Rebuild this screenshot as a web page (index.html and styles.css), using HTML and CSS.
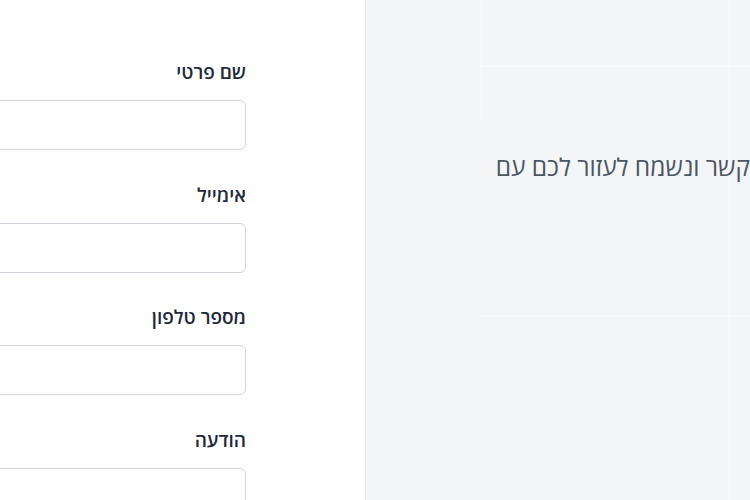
FILE: index.html
```html
<!DOCTYPE html>
<html lang="he">
<head>
<meta charset="utf-8">
<link rel="stylesheet" href="styles.css">
</head>
<body>
<div class="page">
  <section class="form-col">
    <form class="form" dir="rtl">
      <div class="field">
        <label class="label">שם פרטי</label>
        <input class="input" type="text">
      </div>
      <div class="field">
        <label class="label">אימייל</label>
        <input class="input" type="email">
      </div>
      <div class="field">
        <label class="label">מספר טלפון</label>
        <input class="input" type="tel">
      </div>
      <div class="field">
        <label class="label">הודעה</label>
        <textarea class="input textarea"></textarea>
      </div>
    </form>
  </section>
  <aside class="info">
    <p class="info-text" dir="rtl">קשר ונשמח לעזור לכם עם</p>
  </aside>
</div>
</body>
</html>
```
FILE: styles.css
```css
html, body {
  margin: 0;
  padding: 0;
  background: #ffffff;
  font-family: "Open Sans", "Liberation Sans", sans-serif;
}
.page {
  display: flex;
  width: 750px;
  height: 500px;
  overflow: hidden;
}
.form-col {
  width: 365px;
  flex: none;
  overflow: hidden;
  display: flex;
  justify-content: flex-end;
  padding-right: 119px;
  box-sizing: border-box;
}
.form {
  flex: none;
  width: 320px;
  padding-top: 60px;
  display: flex;
  flex-direction: column;
  gap: 32.5px;
}
.field {
  display: flex;
  flex-direction: column;
  gap: 16px;
}
.label {
  font-size: 19px;
  line-height: 24px;
  font-weight: 600;
  color: #1f2937;
  text-align: right;
}
.input {
  display: block;
  box-sizing: border-box;
  width: 100%;
  height: 50px;
  margin: 0;
  border: 1px solid #d1d5db;
  border-radius: 6px;
  background: #ffffff;
  font: inherit;
}
.textarea {
  height: 120px;
  resize: none;
}
.info {
  flex: none;
  width: 385px;
  box-sizing: border-box;
  border-left: 1px solid #e5e7eb;
  background-color: #f4f5f7;
  background-image:
    linear-gradient(to bottom, transparent 65px, rgba(255,255,255,0.35) 65px, rgba(255,255,255,0.35) 67px, transparent 67px),
    linear-gradient(to right, transparent 362px, rgba(255,255,255,0.35) 362px, rgba(255,255,255,0.35) 364px, transparent 364px),
    linear-gradient(to right, transparent 114px, rgba(255,255,255,0.3) 114px, rgba(255,255,255,0.3) 116px, transparent 116px);
  background-position: 114px 0, 0 0, 0 0;
  background-size: 100% 250px, 100% 100%, 100% 120px;
  background-repeat: repeat-y, no-repeat, no-repeat;
  overflow: hidden;
  display: flex;
  justify-content: flex-end;
  padding-top: 151px;
}
.info-text {
  margin: 0;
  font-size: 24.5px;
  line-height: 32px;
  color: #4b5563;
  white-space: nowrap;
  height: 32px;
}
```
